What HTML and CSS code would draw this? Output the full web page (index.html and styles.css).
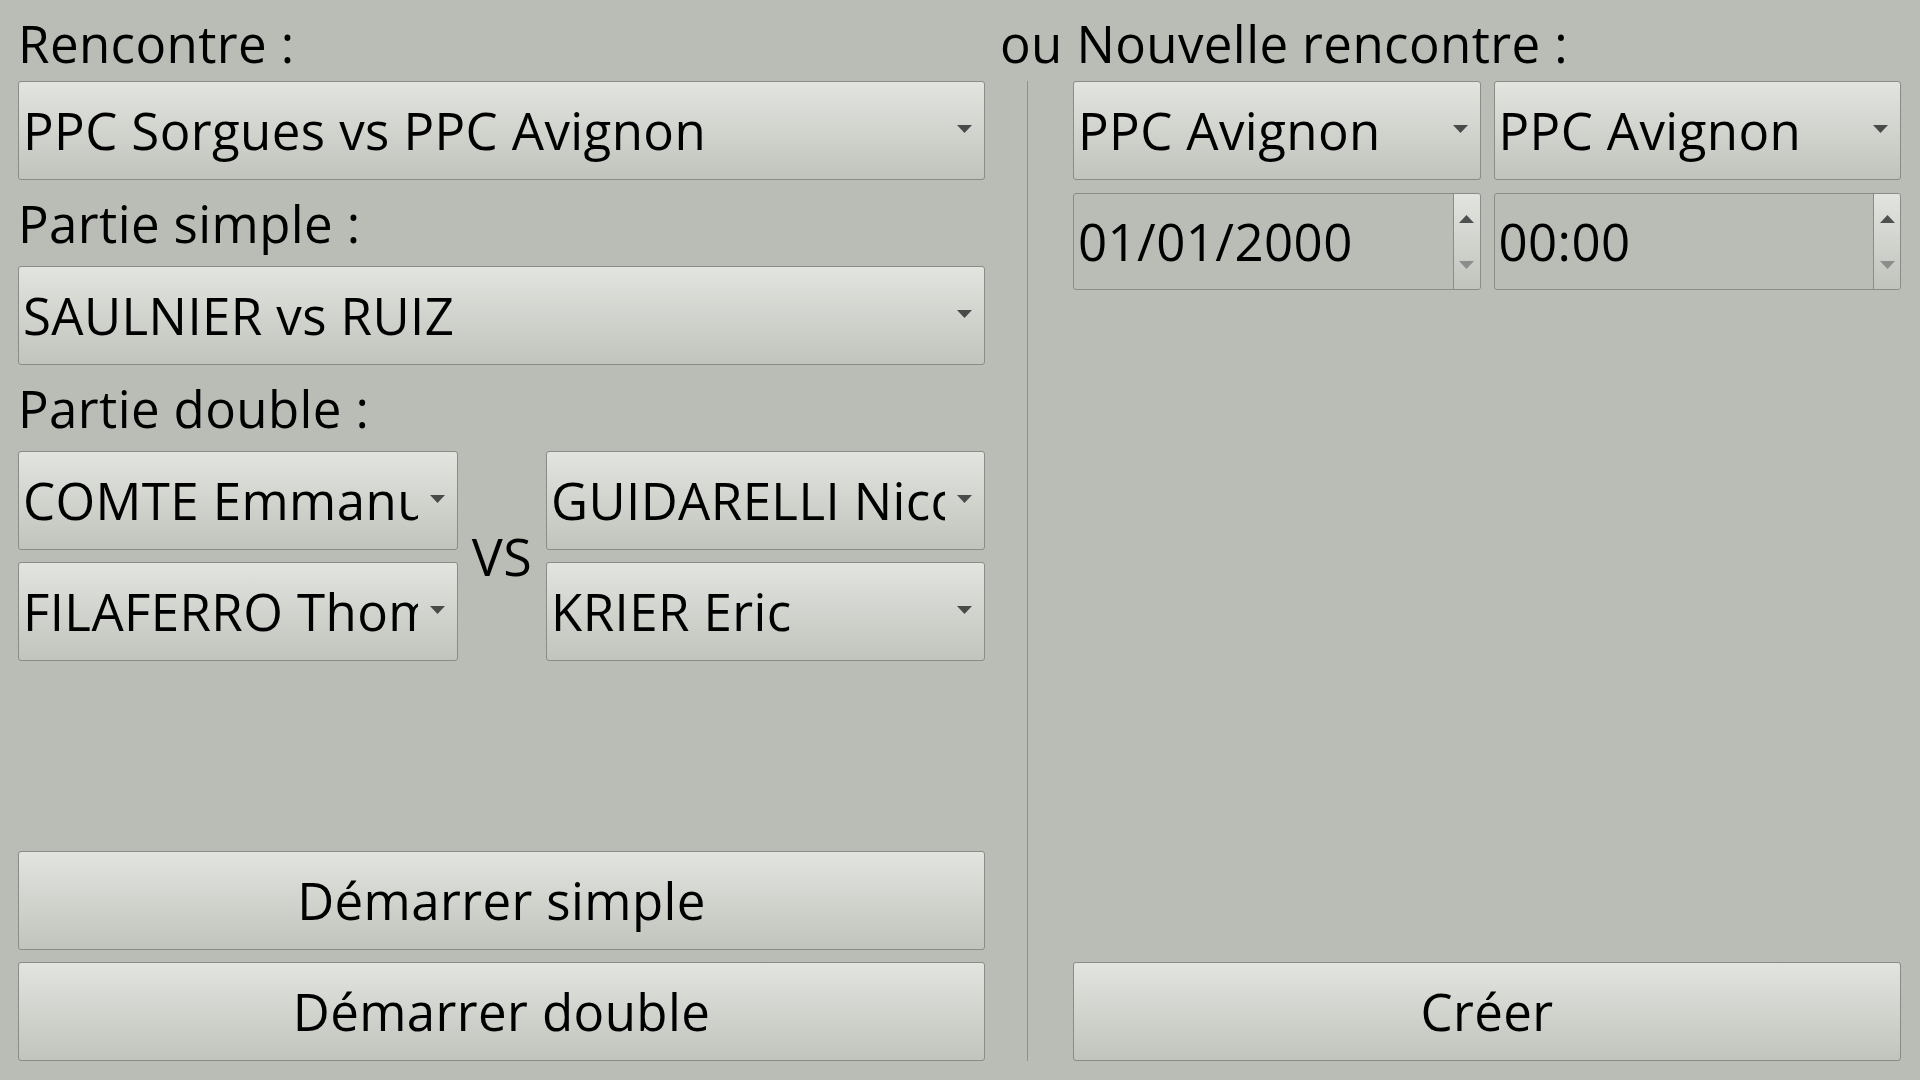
FILE: index.html
```html
<!DOCTYPE html>
<html lang="fr">
<head>
<meta charset="utf-8">
<title>Rencontre</title>
<link rel="stylesheet" href="styles.css">
</head>
<body>
<div class="window">
  <div class="left">
    <div class="label l1">Rencontre :</div>
    <div class="combo"><span class="combo-text">PPC Sorgues vs PPC Avignon</span><svg class="arrow" viewBox="0 0 15 8"><path d="M0 0H15L7.5 8Z"/></svg></div>
    <div class="label l2">Partie simple :</div>
    <div class="combo"><span class="combo-text">SAULNIER vs RUIZ</span><svg class="arrow" viewBox="0 0 15 8"><path d="M0 0H15L7.5 8Z"/></svg></div>
    <div class="label l2">Partie double :</div>
    <div class="doubles">
      <div class="combo"><span class="combo-text">COMTE Emmanuel</span><svg class="arrow" viewBox="0 0 15 8"><path d="M0 0H15L7.5 8Z"/></svg></div>
      <div class="vs">VS</div>
      <div class="combo"><span class="combo-text">GUIDARELLI Niccolò</span><svg class="arrow" viewBox="0 0 15 8"><path d="M0 0H15L7.5 8Z"/></svg></div>
      <div class="combo"><span class="combo-text">FILAFERRO Thomas</span><svg class="arrow" viewBox="0 0 15 8"><path d="M0 0H15L7.5 8Z"/></svg></div>
      <div class="combo"><span class="combo-text">KRIER Eric</span><svg class="arrow" viewBox="0 0 15 8"><path d="M0 0H15L7.5 8Z"/></svg></div>
    </div>
    <div class="spacer"></div>
    <button class="btn">Démarrer simple</button>
    <button class="btn btn-gap">Démarrer double</button>
  </div>
  <div class="right">
    <div class="label l1">ou Nouvelle rencontre :</div>
    <div class="right-body">
      <div class="sep-col"><div class="vline"></div></div>
      <div class="right-col">
        <div class="pair">
          <div class="combo"><span class="combo-text">PPC Avignon</span><svg class="arrow" viewBox="0 0 15 8"><path d="M0 0H15L7.5 8Z"/></svg></div>
          <div class="combo"><span class="combo-text">PPC Avignon</span><svg class="arrow" viewBox="0 0 15 8"><path d="M0 0H15L7.5 8Z"/></svg></div>
        </div>
        <div class="pair spins">
          <div class="spin"><span class="spin-text">01/01/2000</span><div class="spin-btns"><svg class="sarrow up" viewBox="0 0 15 8"><path d="M7.5 0L15 8H0Z"/></svg><svg class="sarrow down" viewBox="0 0 15 8"><path d="M0 0H15L7.5 8Z"/></svg></div></div>
          <div class="spin"><span class="spin-text">00:00</span><div class="spin-btns"><svg class="sarrow up" viewBox="0 0 15 8"><path d="M7.5 0L15 8H0Z"/></svg><svg class="sarrow down" viewBox="0 0 15 8"><path d="M0 0H15L7.5 8Z"/></svg></div></div>
        </div>
        <div class="spacer"></div>
        <button class="btn">Créer</button>
      </div>
    </div>
  </div>
</div>
</body>
</html>
```
FILE: styles.css
```css
html, body {
  margin: 0;
  padding: 0;
  background: #babdb6;
}
body {
  font-family: "Open Sans", "Noto Sans", sans-serif;
  font-size: 51px;
  letter-spacing: 0.4px;
  color: #000;
}
.window {
  display: flex;
  width: 1920px;
  height: 1080px;
  box-sizing: border-box;
  padding: 0 19px 19px 18px;
}
.left {
  width: 967px;
  display: flex;
  flex-direction: column;
}
.right {
  flex: 1;
  margin-left: 15px;
  display: flex;
  flex-direction: column;
}
.label {
  white-space: nowrap;
}
.l1 {
  height: 81px;
  box-sizing: border-box;
  padding-top: 5px;
  line-height: 76px;
}
.l2 {
  height: 86px;
  line-height: 86px;
}
.combo {
  height: 99px;
  box-sizing: border-box;
  border: 1px solid #8a8c87;
  border-radius: 3px;
  background: linear-gradient(#e2e4df, #c1c3bd);
  display: flex;
  align-items: center;
  padding-left: 4px;
}
.combo-text {
  flex: 1;
  min-width: 0;
  overflow: hidden;
  white-space: nowrap;
  line-height: 97px;
}
.arrow {
  flex: none;
  width: 15px;
  height: 8px;
  margin: 0 12px 3px 12px;
  fill: #4a4a4a;
}
.doubles {
  display: grid;
  grid-template-columns: 440px 1fr 439px;
  grid-template-rows: 99px 99px;
  row-gap: 12px;
}
.vs {
  grid-column: 2;
  grid-row: 1 / 3;
  align-self: center;
  text-align: center;
  line-height: 60px;
  font-size: 52px;
}
.doubles .combo:nth-child(1) { grid-column: 1; grid-row: 1; }
.doubles .combo:nth-child(3) { grid-column: 3; grid-row: 1; }
.doubles .combo:nth-child(4) { grid-column: 1; grid-row: 2; }
.doubles .combo:nth-child(5) { grid-column: 3; grid-row: 2; }
.spacer {
  flex: 1;
}
.btn {
  display: block;
  width: 100%;
  height: 99px;
  box-sizing: border-box;
  margin: 0;
  padding: 0;
  border: 1px solid #8a8c87;
  border-radius: 3px;
  background: linear-gradient(#e2e4df, #c1c3bd);
  font: inherit;
  letter-spacing: inherit;
  color: #000;
  text-align: center;
  line-height: 97px;
}
.btn-gap {
  margin-top: 12px;
}
.right-body {
  flex: 1;
  display: flex;
}
.sep-col {
  width: 73px;
  flex: none;
  display: flex;
}
.vline {
  margin-left: 27px;
  width: 1px;
  background: #8e908a;
}
.right-col {
  flex: 1;
  display: flex;
  flex-direction: column;
}
.pair {
  display: grid;
  grid-template-columns: 1fr 1fr;
  column-gap: 13px;
}
.spins {
  margin-top: 13px;
}
.spin {
  height: 97px;
  box-sizing: border-box;
  border: 1px solid #8a8c87;
  border-radius: 3px;
  display: flex;
  overflow: hidden;
}
.spin-text {
  flex: 1;
  padding-left: 4px;
  line-height: 95px;
  white-space: nowrap;
}
.spin-btns {
  width: 26px;
  flex: none;
  border-left: 1px solid #8a8c87;
  background: linear-gradient(#e2e4df, #c1c3bd);
  display: flex;
  flex-direction: column;
  justify-content: space-between;
  align-items: center;
  padding: 21px 0 20px;
  box-sizing: content-box;
}
.sarrow {
  width: 15px;
  height: 8px;
}
.sarrow.up { fill: #505050; }
.sarrow.down { fill: #8c8c8c; }
```
